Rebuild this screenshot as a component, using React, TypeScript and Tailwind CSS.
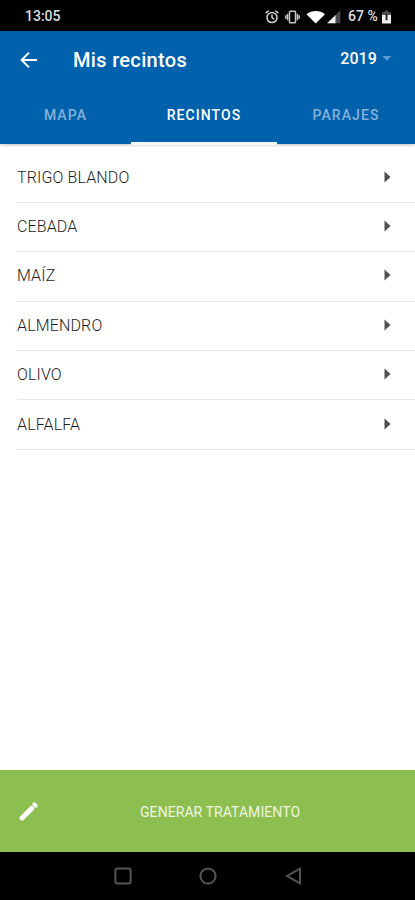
const crops = ['TRIGO BLANDO', 'CEBADA', 'MAÍZ', 'ALMENDRO', 'OLIVO', 'ALFALFA'];

function StatusBar() {
  return (
    <div className="flex h-[31px] items-center bg-black pt-[2px] pl-[25px] pr-[24px] text-[14px] font-medium text-[#dedede]">
      <span>13:05</span>
      <svg className="ml-auto" width="16" height="16" viewBox="0 0 16 16" fill="none" stroke="#d4d4d4" strokeWidth="1.5">
        <circle cx="8" cy="8.6" r="5" />
        <path d="M1.6 4.2 4.6 1.6M14.4 4.2l-3-2.6M8 5.6v3.2l2.3 1.4" />
      </svg>
      <svg className="ml-[5px]" width="15" height="16" viewBox="0 0 15 16" fill="none" stroke="#c8c8c8" strokeWidth="1.5">
        <rect x="4.5" y="2.3" width="6" height="11.4" rx="0.8" />
        <path d="M2.6 4.8v6.4M.8 6.2v3.6M12.4 4.8v6.4M14.2 6.2v3.6" />
      </svg>
      <svg className="ml-[6px]" width="20" height="16" viewBox="0 0 20 16">
        <path d="M.5 5.2C6 .9 13.8.9 19 5.2L9.7 14.6z" fill="#fff" />
      </svg>
      <svg className="ml-[1px]" width="15" height="16" viewBox="0 0 15 16">
        <path d="M.2 14.2 13.4 1.2v13z" fill="#484848" />
        <path d="M.2 14.2 8.5 6.1v8.1z" fill="#f0f0f0" />
      </svg>
      <span className="ml-[6px] w-[31px] whitespace-nowrap">67 %</span>
      <svg className="ml-[3px]" width="9" height="16" viewBox="0 0 9 16">
        <path d="M2.8 1.8h3.4v1.5H9V6H0V3.3h2.8z" fill="#555" />
        <path d="M0 6h9v8.5H0z" fill="#eee" />
        <path d="M3.6 4.5h1.9v6.8H3.6z" fill="#222" />
      </svg>
    </div>
  );
}

function Header() {
  return (
    <header className="relative z-10 h-[113px] bg-[#0061ad] text-white shadow-[0_1px_3px_rgba(0,0,0,0.25)]">
      <div className="flex h-[57px] items-center pl-[20px] pr-[23px]">
        <svg width="18" height="18" viewBox="0 0 18 18" fill="none" stroke="#fff" strokeWidth="2">
          <path d="M17 9H2M9 1.6 1.6 9 9 16.4" />
        </svg>
        <h1 className="ml-[35px] pt-px text-[20px] font-medium tracking-[0.32px]">Mis recintos</h1>
        <span className="ml-auto pb-[2px] text-[16px] font-medium tracking-[0.1px]">2019</span>
        <svg className="ml-[5px] mb-[2px]" width="10" height="5" viewBox="0 0 10 5">
          <path d="M.5 0h9L5 4.7z" fill="#5f9bcf" />
        </svg>
      </div>
      <nav className="grid h-[57px] grid-cols-[131px_146px_138px] text-center text-[14px] font-medium leading-[54px] tracking-[1.08px]">
        <span className="text-[#86b1d8]">MAPA</span>
        <span className="border-b-[3px] border-[#f4f6f8]">RECINTOS</span>
        <span className="text-[#86b1d8]">PARAJES</span>
      </nav>
    </header>
  );
}

export default function App() {
  return (
    <div className="flex h-[900px] w-[415px] flex-col overflow-hidden bg-white font-[Roboto,sans-serif]">
      <StatusBar />
      <Header />
      <main className="flex-1 pt-[9.4px] pl-[17px]">
        {crops.map((name) => (
          <div key={name} className="flex h-[49.4px] items-center justify-between border-b-[1.5px] border-[#e6e6e6] pr-[24px] text-[16px] font-light tracking-[0.14px] text-[#1c1c1c]">
            <span>{name}</span>
            <svg className="mb-[2px]" width="7" height="12" viewBox="0 0 7 12">
              <path d="M.5.5 6.5 6l-6 5.5z" fill="#505050" />
            </svg>
          </div>
        ))}
      </main>
      <button className="flex h-[82px] items-center bg-[#8dbe50] pl-[19px] text-[14px] text-[#edf6e2]">
        <svg width="20" height="20" viewBox="0 0 20 20" fill="none" stroke="#fff" strokeLinecap="round">
          <path d="M3.1 16.9 12.6 7.4" strokeWidth="5" />
          <path d="m15.2 3.2 1.6 1.6" strokeWidth="3.8" />
        </svg>
        <span className="ml-[101px] pt-[2px] tracking-[0.07px]">GENERAR TRATAMIENTO</span>
      </button>
      <div className="flex h-[48px] items-center bg-black pl-[114px]">
        <svg width="188" height="18" viewBox="0 0 188 18" fill="none" stroke="#555" strokeWidth="2">
          <rect x="1.4" y="1.4" width="15.2" height="15.2" rx="2" />
          <circle cx="94" cy="9" r="7.6" />
          <path d="M186 1.7v14.6L173 9z" />
        </svg>
      </div>
    </div>
  );
}
